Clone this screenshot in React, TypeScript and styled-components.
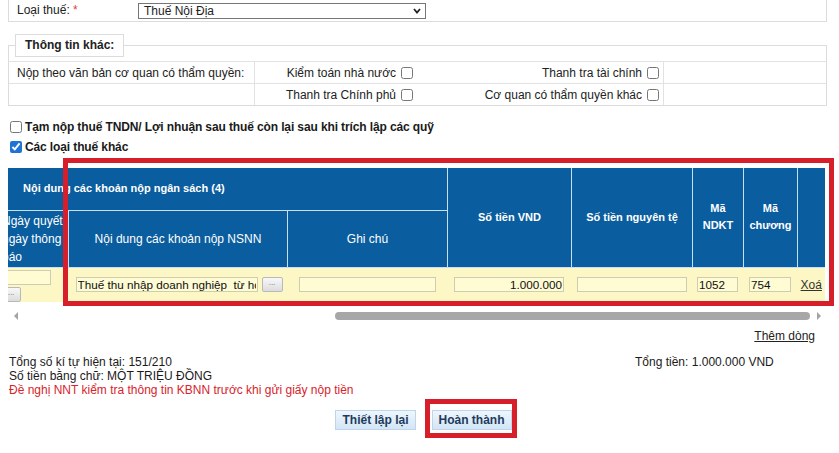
import React from "react";
import styled, { createGlobalStyle } from "styled-components";

const GlobalStyle = createGlobalStyle`
  html, body { margin: 0; padding: 0; background: #fff; }
  body { font-family: "Liberation Sans", Arial, sans-serif; font-size: 12px; color: #222; }
  * { box-sizing: border-box; }
`;

const Page = styled.div`
  position: relative;
  width: 839px;
  height: 453px;
  overflow: hidden;
`;

const TaxTypeBox = styled.div`
  margin: 0 12px 0 8px;
  height: 22px;
  border: 1px solid #dcdcdc;
  border-top: none;
  display: grid;
  grid-template-columns: 129px 288px;
  align-items: start;
  padding-top: 3px;
`;

const FieldLabel = styled.div`
  padding-left: 8px;
  line-height: 14px;
  font-size: 12px;
`;

const Required = styled.span`
  color: #e23b3b;
`;

const SelectBox = styled.div`
  height: 16px;
  border: 1px solid #767676;
  display: flex;
  align-items: center;
  justify-content: space-between;
  padding: 0 4px 0 5px;
  font-size: 12px;
  line-height: 14px;
  background: #fff;
`;

const InfoFieldset = styled.fieldset`
  margin: 12px 12px 0 8px;
  padding: 0;
  border: 1px solid #dcdcdc;
  min-width: 0;
`;

const InfoLegend = styled.legend`
  margin-left: 6px;
  padding: 4px 9px;
  border: 1px solid #dcdcdc;
  background: #fff;
  font-weight: bold;
  font-size: 12px;
  line-height: 13px;
`;

const InfoGrid = styled.div`
  margin-top: 4px;
  display: grid;
  grid-template-columns: 246px 165px 244px 162px;
`;

const InfoCell = styled.div<{ $align?: "left" | "right"; $divider?: boolean; $pr?: number }>`
  height: 22px;
  border-top: 1px solid #e2e2e2;
  border-right: ${(p) => (p.$divider ? "1px solid #e2e2e2" : "none")};
  display: flex;
  align-items: center;
  justify-content: ${(p) => (p.$align === "right" ? "flex-end" : "flex-start")};
  padding: 0 ${(p) => p.$pr ?? 8}px 0 8px;
  font-size: 12px;
`;

const Check = styled.input.attrs({ type: "checkbox" })`
  width: 12px;
  height: 12px;
  margin: 0 0 0 5px;
  accent-color: #1f73d6;
`;

const CheckLine = styled.label<{ $mt: number }>`
  display: flex;
  align-items: center;
  height: 20px;
  margin-top: ${(p) => p.$mt}px;
  padding-left: 10px;
  font-weight: bold;
  font-size: 12px;
  letter-spacing: -0.12px;
  color: #1a1a1a;
`;

const LineCheck = styled.input.attrs({ type: "checkbox" })`
  width: 12px;
  height: 12px;
  margin: 0 3px 0 0;
  accent-color: #1f73d6;
`;

const TableViewport = styled.div`
  margin: 11px 0 0 8px;
  width: 817px;
  overflow: hidden;
`;

const BudgetTable = styled.table`
  margin-left: -7px;
  width: 824px;
  table-layout: fixed;
  border-collapse: collapse;
  border: hidden;
`;

const HeadCell = styled.th<{ $kind: "group" | "main" | "sub"; $align?: "left" | "center"; $h?: number }>`
  background: #0a5d9e;
  color: #fff;
  border: 1px solid #c3e0f5;
  height: ${(p) => (p.$h ? `${p.$h}px` : "auto")};
  padding: 0 1px;
  padding-left: ${(p) => (p.$kind === "group" ? 22 : p.$align === "left" ? 1 : 2)}px;
  text-align: ${(p) => (p.$kind === "group" || p.$align === "left" ? "left" : "center")};
  vertical-align: middle;
  font-size: ${(p) => (p.$kind === "sub" ? 12 : 11)}px;
  font-weight: ${(p) => (p.$kind === "sub" ? "normal" : "bold")};
  line-height: ${(p) => (p.$kind === "sub" ? 18 : 17)}px;
  white-space: nowrap;
`;

const DataRow = styled.tr`
  height: 34px;
`;

const DataCell = styled.td<{ $align?: "left" | "center"; $pl?: number }>`
  background: #fcf7c4;
  border: 1px solid #fcf7c4;
  padding: 0 0 0 ${(p) => p.$pl ?? 0}px;
  text-align: ${(p) => p.$align ?? "center"};
  vertical-align: middle;
`;

const StackBox = styled.div`
  display: flex;
  flex-direction: column;
  align-items: flex-start;
  gap: 2px;
  padding-top: 2px;
`;

const InlineBox = styled.div`
  display: flex;
  align-items: center;
  gap: 4px;
`;

const FieldInput = styled.input<{ $w: number; $right?: boolean }>`
  width: ${(p) => p.$w}px;
  height: 15px;
  border: 1px solid #cfccb4;
  background: #fffcd4;
  font-family: "Liberation Sans", Arial, sans-serif;
  font-size: 11.7px;
  color: #111;
  padding: 0 1px;
  margin: 0;
  text-align: ${(p) => (p.$right ? "right" : "left")};
  outline: none;
  vertical-align: middle;
`;

const DotsButton = styled.button<{ $w?: number }>`
  width: ${(p) => p.$w ?? 21}px;
  height: 15px;
  border: 1px solid #b9b9b9;
  border-radius: 2px;
  background: linear-gradient(#f8f8f8, #dcdcdc);
  font-size: 8px;
  color: #666;
  padding: 0 0 3px;
  margin: 0;
  line-height: 1;
`;

const DeleteLink = styled.a`
  color: #333;
  text-decoration: underline;
  font-size: 12px;
`;

const ScrollBar = styled.div`
  margin: 8px 0 0 8px;
  width: 817px;
  height: 12px;
  display: flex;
  align-items: center;
`;

const ScrollArrow = styled.div<{ $dir: "left" | "right" }>`
  width: 0;
  height: 0;
  margin: 0 ${(p) => (p.$dir === "left" ? "5px 0 6px" : "4px 0 5px")};
  border-top: 4px solid transparent;
  border-bottom: 4px solid transparent;
  ${(p) => (p.$dir === "left" ? "border-right: 4px solid #a3a3a3;" : "border-left: 4px solid #a3a3a3;")}
`;

const ScrollTrack = styled.div`
  flex: 1;
  display: flex;
  align-items: center;
`;

const ScrollThumb = styled.div<{ $offset: number; $size: number }>`
  margin-left: ${(p) => p.$offset}px;
  width: ${(p) => p.$size}px;
  height: 8px;
  border-radius: 4px;
  background: #a7a7a7;
`;

const AddRow = styled.div`
  margin-top: 6px;
  height: 16px;
  line-height: 16px;
  text-align: right;
  padding-right: 24px;
`;

const AddLink = styled.a`
  color: #222;
  text-decoration: underline;
  font-size: 12px;
`;

const Summary = styled.div`
  margin-top: 11px;
  padding-left: 9px;
  display: grid;
  grid-template-columns: 626px auto;
  line-height: 14px;
  font-size: 12px;
  color: #1a1a1a;
`;

const Warning = styled.div`
  color: #d8232a;
`;

const Actions = styled.div`
  margin-top: 13px;
  padding-left: 8px;
  display: flex;
  justify-content: center;
  gap: 16px;
`;

const ActionButton = styled.button`
  height: 20px;
  padding: 0 6px;
  border: 1px solid #bfd6ea;
  background: linear-gradient(#eef6fd, #d3e6f6);
  font-family: "Liberation Sans", Arial, sans-serif;
  font-weight: bold;
  font-size: 12px;
  color: #1f3a5c;
  line-height: 18px;
`;

const Highlight = styled.div<{ $x: number; $y: number; $w: number; $h: number }>`
  position: absolute;
  left: ${(p) => p.$x}px;
  top: ${(p) => p.$y}px;
  width: ${(p) => p.$w}px;
  height: ${(p) => p.$h}px;
  border: 5px solid #d61f2a;
  pointer-events: none;
`;

function Chevron() {
  return (
    <svg width="8" height="6" viewBox="0 0 8 6">
      <polyline points="1,1 4,4.5 7,1" fill="none" stroke="#222" strokeWidth="1.8" />
    </svg>
  );
}

export default function App() {
  return (
    <Page>
      <GlobalStyle />
      <TaxTypeBox>
        <FieldLabel>
          Loại thuế: <Required>*</Required>
        </FieldLabel>
        <SelectBox>
          <span>Thuế Nội Địa</span>
          <Chevron />
        </SelectBox>
      </TaxTypeBox>

      <InfoFieldset>
        <InfoLegend>Thông tin khác:</InfoLegend>
        <InfoGrid>
          <InfoCell $divider>Nộp theo văn bản cơ quan có thẩm quyền:</InfoCell>
          <InfoCell $align="right" $pr={7}>
            Kiểm toán nhà nước <Check />
          </InfoCell>
          <InfoCell $align="right" $divider $pr={4}>
            Thanh tra tài chính <Check />
          </InfoCell>
          <InfoCell />
          <InfoCell $divider />
          <InfoCell $align="right" $pr={7}>
            Thanh tra Chính phủ <Check />
          </InfoCell>
          <InfoCell $align="right" $divider $pr={4}>
            Cơ quan có thẩm quyền khác <Check />
          </InfoCell>
          <InfoCell />
        </InfoGrid>
      </InfoFieldset>

      <CheckLine $mt={11}>
        <LineCheck />
        Tạm nộp thuế TNDN/ Lợi nhuận sau thuế còn lại sau khi trích lập các quỹ
      </CheckLine>
      <CheckLine $mt={0}>
        <LineCheck defaultChecked />
        Các loại thuế khác
      </CheckLine>

      <TableViewport>
        <BudgetTable>
          <colgroup>
            <col style={{ width: 67 }} />
            <col style={{ width: 219 }} />
            <col style={{ width: 160 }} />
            <col style={{ width: 124 }} />
            <col style={{ width: 121 }} />
            <col style={{ width: 51 }} />
            <col style={{ width: 54 }} />
            <col style={{ width: 28 }} />
          </colgroup>
          <thead>
            <tr>
              <HeadCell $kind="group" colSpan={3} $h={42}>
                Nội dung các khoản nộp ngân sách (4)
              </HeadCell>
              <HeadCell $kind="main" rowSpan={2}>Số tiền VND</HeadCell>
              <HeadCell $kind="main" rowSpan={2}>Số tiền nguyên tệ</HeadCell>
              <HeadCell $kind="main" rowSpan={2}>
                Mã
                <br />
                NDKT
              </HeadCell>
              <HeadCell $kind="main" rowSpan={2}>
                Mã
                <br />
                chương
              </HeadCell>
              <HeadCell $kind="main" rowSpan={2} />
            </tr>
            <tr>
              <HeadCell $kind="sub" $align="left" $h={57}>
                Ngày quyết
                <br />
                ngày thông
                <br />
                báo
              </HeadCell>
              <HeadCell $kind="sub">Nội dung các khoản nộp NSNN</HeadCell>
              <HeadCell $kind="sub">Ghi chú</HeadCell>
            </tr>
          </thead>
          <tbody>
            <DataRow>
              <DataCell $align="left">
                <StackBox>
                  <FieldInput $w={50} defaultValue="" />
                  <DotsButton $w={20}>...</DotsButton>
                </StackBox>
              </DataCell>
              <DataCell $align="left" $pl={7}>
                <InlineBox>
                  <FieldInput $w={182} defaultValue="Thuế thu nhập doanh nghiệp  từ hoạt động sản xuất kinh doanh" />
                  <DotsButton>...</DotsButton>
                </InlineBox>
              </DataCell>
              <DataCell>
                <FieldInput $w={137} defaultValue="" />
              </DataCell>
              <DataCell>
                <FieldInput $w={110} $right defaultValue="1.000.000" />
              </DataCell>
              <DataCell>
                <FieldInput $w={110} defaultValue="" />
              </DataCell>
              <DataCell>
                <FieldInput $w={41} defaultValue="1052" />
              </DataCell>
              <DataCell>
                <FieldInput $w={42} defaultValue="754" />
              </DataCell>
              <DataCell>
                <DeleteLink href="#">Xoá</DeleteLink>
              </DataCell>
            </DataRow>
          </tbody>
        </BudgetTable>
      </TableViewport>

      <ScrollBar>
        <ScrollArrow $dir="left" />
        <ScrollTrack>
          <ScrollThumb $offset={312} $size={475} />
        </ScrollTrack>
        <ScrollArrow $dir="right" />
      </ScrollBar>

      <AddRow>
        <AddLink href="#">Thêm dòng</AddLink>
      </AddRow>

      <Summary>
        <div>
          <div>Tổng số kí tự hiện tại: 151/210</div>
          <div>Số tiền bằng chữ: MỘT TRIỆU ĐỒNG</div>
          <Warning>Đề nghị NNT kiểm tra thông tin KBNN trước khi gửi giấy nộp tiền</Warning>
        </div>
        <div>Tổng tiền: 1.000.000 VND</div>
      </Summary>

      <Actions>
        <ActionButton>Thiết lập lại</ActionButton>
        <ActionButton>Hoàn thành</ActionButton>
      </Actions>

      <Highlight $x={63} $y={158} $w={771} $h={148} />
      <Highlight $x={425} $y={399} $w={92} $h={39} />
    </Page>
  );
}
